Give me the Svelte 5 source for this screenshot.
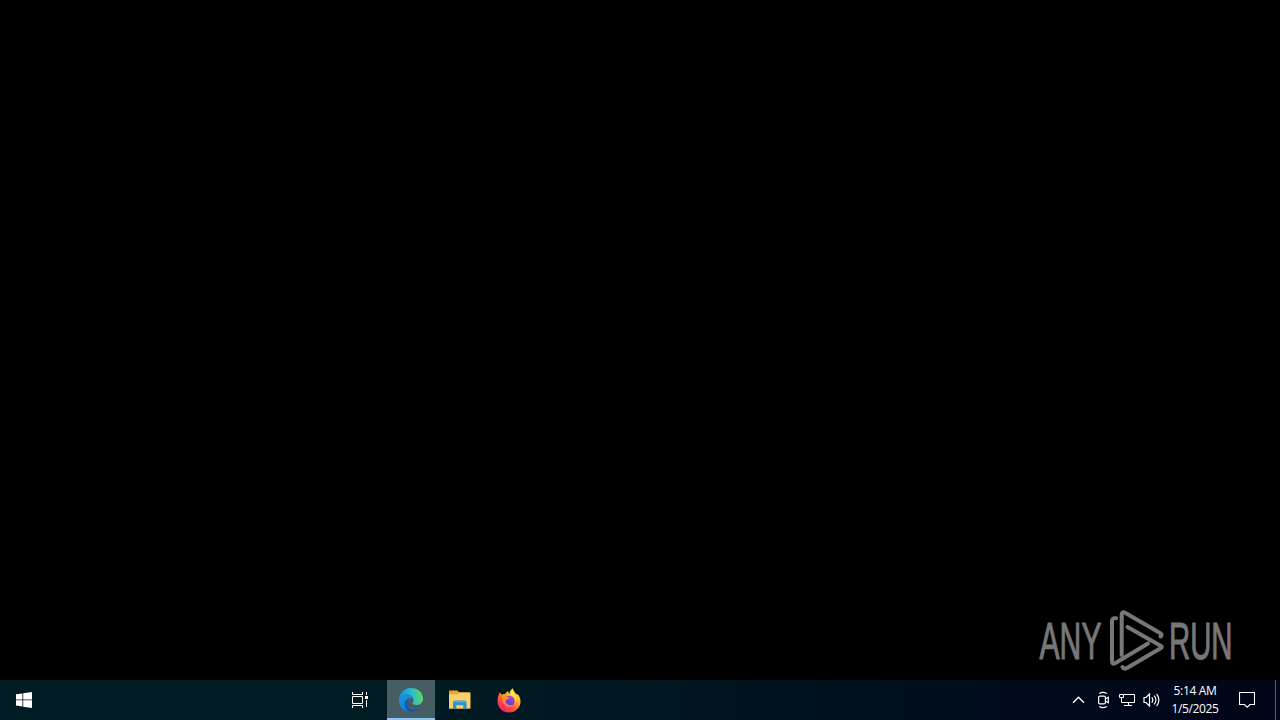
<script>
  const time = '5:14 AM';
  const date = '1/5/2025';
</script>

<div class="screen">
  <main class="desktop">
    <svg class="brand" width="210" height="70" viewBox="1035 605 210 70" aria-label="ANY RUN">
      <g class="letters">
        <text x="1039.5" y="658.7" textLength="62" lengthAdjust="spacingAndGlyphs">ANY</text>
        <text x="1169" y="658.7" textLength="63.5" lengthAdjust="spacingAndGlyphs">RUN</text>
      </g>
      <g transform="translate(1104 605)" fill="none" stroke="#777" stroke-width="4" stroke-linejoin="round" stroke-linecap="round">
        <path d="M12 13.3Q8 12.5 8 16V56Q8 60 11.5 58L44 38.5" />
        <path d="M17.7 50V9.5Q18 6 21.5 8L56 28Q59 30 56.5 31.5" />
        <path d="M23.5 22L57 41Q58.5 42 57 43L23 63Q20 64.5 18.5 62" />
      </g>
    </svg>
  </main>

  <footer class="taskbar">
    <div class="item start">
      <svg width="16" height="16" viewBox="0 0 16 16" fill="#fff">
        <path d="M0 2.3L6.4 1.4V7.4H0ZM7.2 1.3L16 0V7.4H7.2ZM0 8.3H6.4V14.5L0 13.6ZM7.2 8.3H16V16L7.2 14.7Z" />
      </svg>
    </div>
    <div class="item taskview">
      <svg width="18" height="16" viewBox="0 0 18 16" fill="none" stroke="#fff">
        <path d="M1.5 0V2.5H11.5V0M1.5 16V13.5H11.5V16M1.5 4.5H11.5V11.5H1.5ZM15.5 0V3M15.5 8V15" />
        <path d="M14 4h3v3h-3z" fill="#fff" stroke="none" />
      </svg>
    </div>
    <div class="item active">
      <svg width="26" height="26" viewBox="0 0 26 26">
        <defs>
          <linearGradient id="edgeTop" x1="0" y1=".6" x2="1" y2=".5">
            <stop offset="0" stop-color="#168fdc" /><stop offset=".48" stop-color="#22b6d4" /><stop offset="1" stop-color="#5edb66" />
          </linearGradient>
          <linearGradient id="edgeLeft" x1="0" y1="0" x2=".7" y2="1">
            <stop offset="0" stop-color="#1698e4" /><stop offset="1" stop-color="#147bd0" />
          </linearGradient>
        </defs>
        <path d="M1 12C1.4 5.5 6.7 1 13 1C20 1 25 5.8 25 11.5C25 15.5 22 18 18.5 18C15.3 18 14 16.8 14.8 15.6C16.8 12.5 14.5 8 9 7.6C5.5 7.4 2.4 9.3 1 12Z" fill="url(#edgeTop)" />
        <path d="M1 12C2.5 9 5.6 7.4 9 7.6C12.3 7.8 14.5 9.4 15.3 11.5C12.5 9.9 9.2 11.7 9 15.3C8.8 19.5 12.3 23 17.4 23C14.5 25.3 10.5 25.4 7 23.7C3 21.7.6 17.5 1 12Z" fill="url(#edgeLeft)" />
        <path d="M12.2 11.3C9.5 13.5 8.4 17 10.5 20C13.3 24 18.7 23 22.7 19.8C20.6 22.9 17.5 25 13 25C9.3 24.8 6.5 21.2 6.6 17.3C6.7 14.1 9 11.5 12.2 11.3Z" fill="#1559ae" />
      </svg>
    </div>
    <div class="item">
      <svg width="22" height="20" viewBox="0 0 22 20">
        <path d="M0 1.2Q0 .6.6.6H8.4L10.2 2.2H20.6Q21.3 2.2 21.3 3V18.4H0Z" fill="#e6a52c" />
        <path d="M0 4.3H8.5L10.5 2.8H21.3V18.4H0Z" fill="#f5d26b" />
        <path d="M4 19V12.4Q4 10.6 6 10.6H15.5Q17.5 10.6 17.5 12.4V19H14.2V15.2H7.3V19Z" fill="#3291ce" />
        <path d="M5 11H16.5V12.3H5Z" fill="#55ace0" />
      </svg>
    </div>
    <div class="item firefox">
      <svg width="24" height="25" viewBox="0 0 24 25">
        <defs>
          <linearGradient id="fox" x1=".85" y1=".05" x2=".25" y2=".95">
            <stop offset="0" stop-color="#fff04c" /><stop offset=".35" stop-color="#ffb52e" /><stop offset=".65" stop-color="#ff5a36" /><stop offset="1" stop-color="#ef216d" />
          </linearGradient>
          <linearGradient id="globe" x1=".7" y1="0" x2=".3" y2="1">
            <stop offset="0" stop-color="#a245e0" /><stop offset="1" stop-color="#5b3ccc" />
          </linearGradient>
        </defs>
        <path d="M3 4C3.2 5.3 3.8 6 4.4 6.5C6 5.7 7.2 5.8 8.3 6.1C9 4.5 10 3.7 11.3 3.1C11.1 4.2 11.7 5.3 12.5 5.8C12.8 3.4 14 1.5 16 .3C16.2 3.4 18.2 4.7 20 6.7L20.6 5.9C22.5 8.2 23.5 10.6 23.5 13.5C23.5 19.7 18.5 24.5 12 24.5C5.5 24.5.5 19.7.5 13.5C.5 9.8 1.5 6.6 3 4Z" fill="url(#fox)" />
        <circle cx="12.4" cy="13" r="5.2" fill="url(#globe)" />
        <path d="M5 8C7 6.8 9.5 7.4 10.7 9.2L13.2 9.5C13 10.3 11.5 10.7 10 11.2C9 11.7 8.9 12.7 8.3 13.7C9.5 17 13.4 18 15.8 16.5C13.9 19.5 9.7 19.1 7.5 16C5.5 15 5 11.5 5 8Z" fill="#ff8d32" />
        <path d="M13.5 7.3C17.1 8 18.6 10.2 18.4 14C20 11 19.6 8.2 17.6 6.4C16.1 4.9 15.7 3.4 16 1.5C13.8 3.7 13 5.4 13.5 7.3Z" fill="#ffe34b" />
      </svg>
    </div>

    <div class="tray">
      <svg width="13" height="8" viewBox="0 0 13 8" fill="none" stroke="#fff" stroke-width="1.4"><path d="M1 6.8L6.5 1.3L12 6.8" /></svg>
      <svg class="meet" width="13" height="18" viewBox="0 0 13 18" fill="none" stroke="#fff" stroke-width="1.2">
        <rect x="1.6" y="5.1" width="6.8" height="7.8" rx="1.5" /><path d="M8.6 7.8L11.3 6.2V11.8L8.6 10.2M2.2 2.4Q6 .2 9.8 2.4M2.2 15.6Q6 17.8 9.8 15.6" />
      </svg>
      <svg class="network" width="17" height="16" viewBox="0 0 17 16" fill="none" stroke="#fff">
        <path d="M5 2.5H15.5V10.5H5M2.5 6V10.5H5M9.5 11V13.5M5 13.5H13M.5 2.5H4.5V5.5H.5Z" />
      </svg>
      <svg class="volume" width="17" height="16" viewBox="0 0 17 16" fill="none" stroke="#fff" stroke-width="1.15">
        <path d="M1 5.5H3L6.5 2V14L3 10.5H1ZM8.8 5.4Q10.8 8 8.8 10.6M11.2 3.6Q14.6 8 11.2 12.4M13.6 1.8Q18.2 8 13.6 14.2" />
      </svg>
      <div class="clock"><span>{time}</span><span>{date}</span></div>
      <svg class="notice" width="16" height="16" viewBox="0 0 16 16" fill="none" stroke="#fff" stroke-width="1.1"><path d="M.5 .5H15.5V12.5H11L8.2 15.2L5.4 12.5H.5Z" /></svg>
      <div class="peek"></div>
    </div>
  </footer>
</div>

<style>
  :global(body) { margin: 0; background: #000; overflow: hidden; }
  .screen { width: 1280px; height: 720px; display: flex; flex-direction: column; background: #000; }
  .desktop { flex: 1; display: flex; justify-content: flex-end; align-items: flex-end; padding: 0 35px 5px 0; }
  svg { display: block; flex: none; }
  .brand { overflow: visible; }
  .letters { font: 51.5px "Liberation Sans", Arial, sans-serif; fill: #777; stroke: #777; stroke-width: 1.1px; }
  .taskbar { height: 40px; display: flex; background: linear-gradient(90deg, #001b22 0%, #001b22 30%, #001821 48%, #00101c 67%, #000a1b 85%, #010518 100%); }
  .item { width: 48px; height: 40px; margin-right: 1px; display: flex; align-items: center; justify-content: center; flex: none; }
  .start { margin-right: 288px; }
  .taskview { margin-right: 3px; }
  .active { box-sizing: border-box; background: #475d64; border-bottom: 2px solid #8bc5f3; padding-top: 1px; }
  .firefox { margin-right: 0; }
  .tray { flex: 1; display: flex; align-items: center; justify-content: flex-end; }
  .meet { margin-left: 12px; }
  .network { margin-left: 9px; }
  .volume { margin-left: 7px; }
  .clock { width: 60px; margin: 0 0 0 5px; display: flex; flex-direction: column; align-items: center; font: 12px/18px "Open Sans", "Noto Sans", sans-serif; letter-spacing: -.35px; color: #fff; }
  .notice { margin-left: 14px; }
  .peek { height: 40px; width: 5px; margin-left: 20px; box-sizing: border-box; border-left: 1px solid #555b69; }
</style>
